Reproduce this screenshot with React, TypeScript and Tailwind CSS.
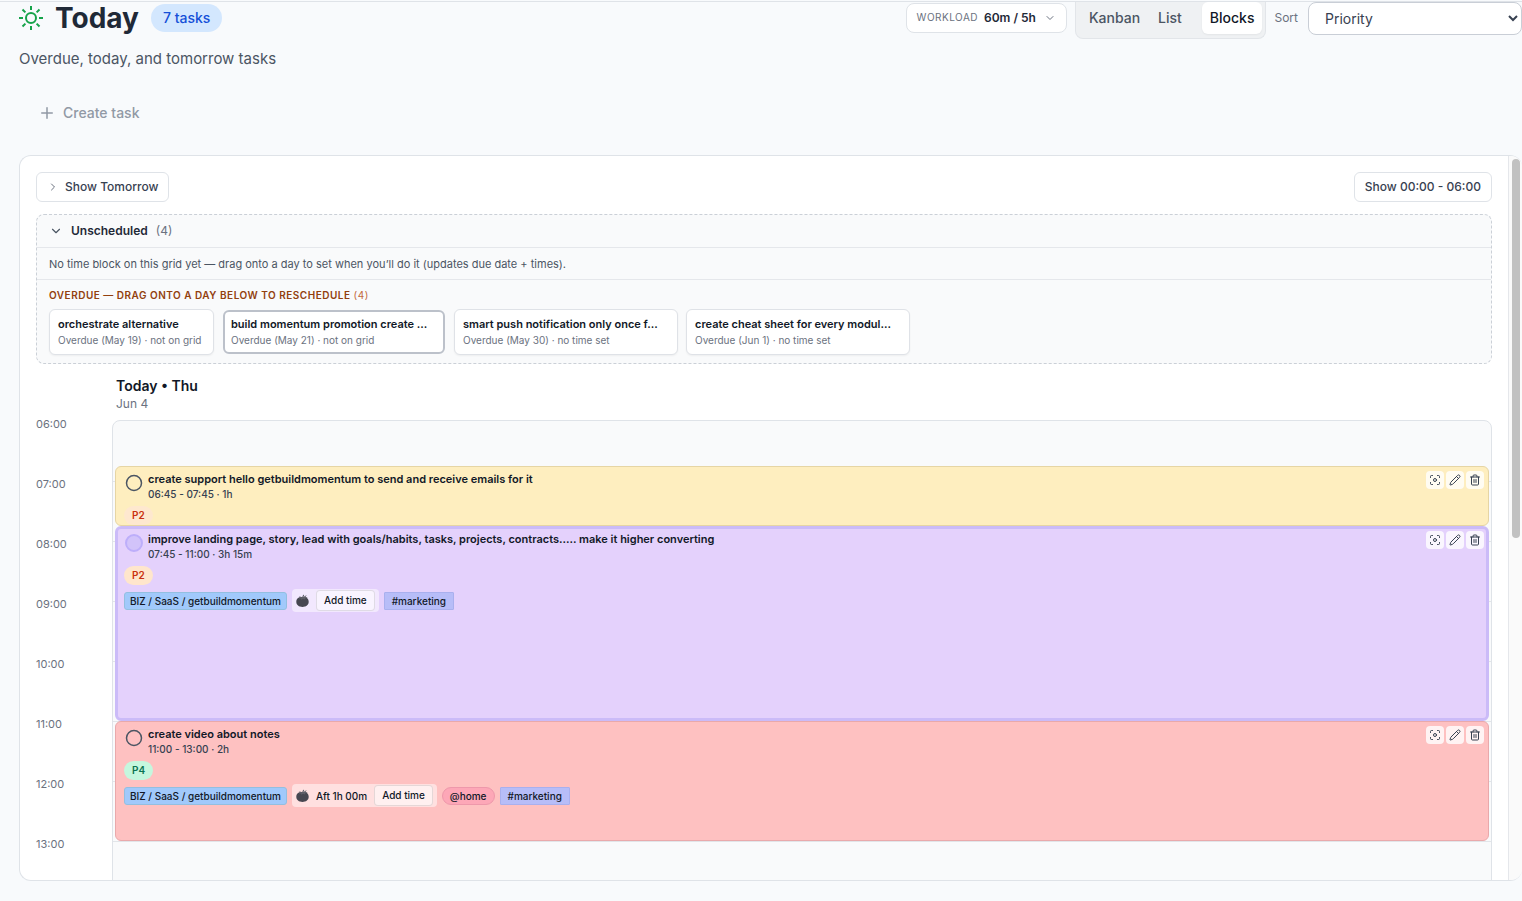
import React, { useState } from 'react';
import { ChevronDown, ChevronRight, Circle, Focus, Pencil, Plus, Trash2 } from 'lucide-react';

const START_HOUR = 6;
const HOUR_HEIGHT = 60;
const HOURS = [6, 7, 8, 9, 10, 11, 12, 13];
const VIEWS = ['Kanban', 'List', 'Blocks'];

const OVERDUE = [
    { title: 'orchestrate alternative', meta: 'Overdue (May 19) · not on grid', width: 'w-[165px]' },
    { title: 'build momentum promotion create ...', meta: 'Overdue (May 21) · not on grid', width: 'w-[222px]', active: true },
    { title: 'smart push notification only once f...', meta: 'Overdue (May 30) · no time set', width: 'w-56' },
    { title: 'create cheat sheet for every modul...', meta: 'Overdue (Jun 1) · no time set', width: 'w-56' },
];

type Block = {
    title: string;
    time: string;
    start: number;
    end: number;
    color: string;
    priority: string;
    priorityColor: string;
    selected?: boolean;
    project?: string;
    estimate?: string;
    context?: string;
    tag?: string;
};

const BLOCKS: Block[] = [
    {
        title: 'create support hello getbuildmomentum to send and receive emails for it',
        time: '06:45 - 07:45 · 1h',
        start: 6.75,
        end: 7.75,
        color: 'bg-[#feeebf] border border-[#e6d5a4]',
        priority: 'P2',
        priorityColor: 'bg-[#fee8cf] text-[#c9300f]',
    },
    {
        title: 'improve landing page, story, lead with goals/habits, tasks, projects, contracts..... make it higher converting',
        time: '07:45 - 11:00 · 3h 15m',
        start: 7.75,
        end: 11,
        color: 'bg-[#e4d1fc] border-3 border-[#cbbbf8]',
        priority: 'P2',
        priorityColor: 'bg-[#ffe6cc] text-[#c9300f]',
        selected: true,
        project: 'BIZ / SaaS / getbuildmomentum',
        tag: '#marketing',
    },
    {
        title: 'create video about notes',
        time: '11:00 - 13:00 · 2h',
        start: 11,
        end: 13,
        color: 'bg-[#fec1c1] border border-[#e9a9ab]',
        priority: 'P4',
        priorityColor: 'bg-[#c5f7de] text-[#0b7350]',
        project: 'BIZ / SaaS / getbuildmomentum',
        estimate: 'Aft 1h 00m',
        context: '@home',
        tag: '#marketing',
    },
];

const pad = (hour: number) => `${String(hour).padStart(2, '0')}:00`;

const SunIcon = () => (
    <svg width="24" height="24" viewBox="0 0 24 24" fill="none" stroke="#16a34a" strokeWidth="2" className="shrink-0">
        <circle cx="12" cy="12" r="5" />
        <path d="M12 0v4M12 20v4M0 12h4M20 12h4M3.5 3.5l2.9 2.9M17.6 17.6l2.9 2.9M3.5 20.5l2.9-2.9M17.6 6.4l2.9-2.9" />
    </svg>
);

const TomatoIcon = () => (
    <svg width="13" height="13" viewBox="0 0 13 13" fill="none" className="shrink-0">
        <path d="M6.5 3C10.200 2.600 12.700 4.500 12.700 7.700c0 3.200-2.700 5.200-6.200 5.200S.3 10.900.3 7.700C.3 4.500 2.800 2.600 6.500 3Z" fill="#474751" />
        <path d="M6 3.400 7.200.8l1 .3-.8 2 3.300-2-1.200 2 2.300.5-2.700.9-.3 1.100-1.700-.9-2 1.100.1-1.400-2.400.3 1.400-1.200-1.500-1 2.300.2Z" fill="#5f5f69" />
    </svg>
);

const BlockAction = ({ label, icon: Icon }: { label: string; icon: React.ElementType }) => (
    <button aria-label={label} className="flex size-[18px] items-center justify-center rounded bg-white/80 text-[#374151]">
        <Icon size={12} strokeWidth={2} />
    </button>
);

const TimeBlock = ({ block }: { block: Block }) => (
    <article
        className={`absolute inset-x-0.5 overflow-hidden rounded-md ${block.color}`}
        style={{
            top: (block.start - START_HOUR) * HOUR_HEIGHT,
            height: (block.end - block.start) * HOUR_HEIGHT,
        }}
    >
        <div className={block.selected ? 'py-0.5 pr-0.5 pl-1.5' : 'py-1 pr-1 pl-2'}>
            <div className="flex items-start gap-1">
                <button
                    aria-label={`Complete ${block.title}`}
                    className="mt-0.5 flex size-5 shrink-0 items-center justify-center"
                >
                    {block.selected ? (
                        <span className="size-[18px] rounded-full border-2 border-[#bdaefa] bg-[#d2c3fa]" />
                    ) : (
                        <Circle size={18} className="text-[#4b5563]" />
                    )}
                </button>
                <div className="min-w-0 flex-1">
                    <h3 className="truncate text-[11px] leading-4 font-semibold text-[#111827]">{block.title}</h3>
                    <p className="text-[10px] leading-[14px] font-medium text-[#374151]">{block.time}</p>
                </div>
                <div className="flex gap-0.5">
                    <BlockAction label="Focus" icon={Focus} />
                    <BlockAction label="Edit" icon={Pencil} />
                    <BlockAction label="Delete" icon={Trash2} />
                </div>
            </div>
            <div className="mt-[5px] flex">
                <span className={`rounded-full px-2 text-[10px] leading-[19px] font-semibold ${block.priorityColor}`}>
                    {block.priority}
                </span>
            </div>
            {block.project && (
                <div className="mt-1 flex items-center gap-[5px] text-[10px] leading-4 font-medium text-[#111827]">
                    <span className="rounded-[3px] border border-[#93bfe0] bg-[#a1c9fb] px-[5px]">{block.project}</span>
                    <div className="flex items-center gap-[7px] rounded bg-white/50 px-1 py-px">
                        <TomatoIcon />
                        {block.estimate && <span>{block.estimate}</span>}
                        <button className="rounded border border-black/10 bg-white/50 px-[7px] leading-[19px]">Add time</button>
                    </div>
                    {block.context && (
                        <span className="rounded-full border border-[#ee98ab] bg-[#fda7b7] px-[7px]">{block.context}</span>
                    )}
                    <span className="rounded-[1px] border border-[#a9b0ee] bg-[#b7bdf8] px-[7px]">{block.tag}</span>
                </div>
            )}
        </div>
    </article>
);

const Header = ({ view, onView }: { view: string; onView: (view: string) => void }) => (
    <header className="pl-[19px]">
        <div className="flex items-start justify-between">
            <div className="flex h-8 items-center gap-3">
                <SunIcon />
                <h1 className="text-[28px] leading-8 font-bold text-[#1f2937]">Today</h1>
                <span className="rounded-full bg-[#d3e7fe] px-3 text-sm leading-7 font-medium text-[#1550d8]">7 tasks</span>
            </div>
            <div className="flex items-start">
                <button className="mt-px mr-2 flex h-[30px] items-center gap-1.5 rounded-lg border border-[#dfe3e8] bg-white px-2.5 text-xs font-semibold text-[#1f2937]">
                    <span className="text-[10px] font-normal tracking-wider text-[#6b7280]">WORKLOAD</span>
                    60m / 5h
                    <ChevronDown size={12} className="ml-0.5 text-[#6b7280]" />
                </button>
                <div className="mr-2 flex gap-0.5 rounded-b-lg border border-t-0 border-[#e2e5e9] bg-[#eff1f3] pr-[3px] pb-1 pl-[5px]">
                    {VIEWS.map(name => (
                        <button
                            key={name}
                            onClick={() => onView(name)}
                            className={`h-8 rounded-md px-2 text-sm font-medium ${
                                name === view ? 'ml-2.5 bg-white text-[#111827] shadow-xs' : 'text-[#4b5563]'
                            }`}
                        >
                            {name}
                        </button>
                    ))}
                </div>
                <label htmlFor="sort" className="mr-2.5 text-xs leading-8 text-[#6b7280]">Sort</label>
                <select
                    id="sort"
                    defaultValue="priority"
                    className="h-[33px] w-[214px] rounded-lg border border-[#c9ced6] bg-white pl-3 text-sm text-[#374151]"
                >
                    <option value="priority">Priority</option>
                </select>
            </div>
        </div>
        <p className="mt-2 text-[15px] leading-6 text-[#4b5563]">Overdue, today, and tomorrow tasks</p>
        <button className="mt-[30px] ml-[19px] flex items-center gap-[7px] text-sm leading-6 font-medium text-[#9199a5]">
            <Plus size={18} /> Create task
        </button>
    </header>
);

const Unscheduled = () => (
    <section className="mt-3 rounded-lg border border-dashed border-[#cbd0d7] bg-[#f9fafb]">
        <button className="flex h-8 w-full items-center gap-2 px-3 text-xs font-semibold text-[#1f2937]">
            <ChevronDown size={14} className="text-[#4b5563]" />
            Unscheduled
            <span className="font-normal text-[#6b7280]">(4)</span>
        </button>
        <p className="border-y border-[#e5e7eb] px-3 pt-1 pb-[3px] text-[11px] leading-6 text-[#4b5563]">
            No time block on this grid yet — drag onto a day to set when you’ll do it (updates due date + times).
        </p>
        <div className="px-3 pt-[7px] pb-2">
            <h2 className="text-[10px] leading-4 font-semibold tracking-wider text-[#92400e]">
                OVERDUE — DRAG ONTO A DAY BELOW TO RESCHEDULE <span className="font-normal text-[#c2693c]">(4)</span>
            </h2>
            <ul className="mt-1.5 flex items-stretch gap-2">
                {OVERDUE.map(task => (
                    <li
                        key={task.title}
                        className={`rounded-md bg-white whitespace-nowrap ${task.width} ${
                            task.active
                                ? 'm-px border-2 border-[#bcc1ca] px-1.5 py-1'
                                : 'border border-[#dfe2e7] px-2 py-1.5 shadow-xs'
                        }`}
                    >
                        <h3 className="text-[11px] leading-4 font-semibold text-[#111827]">{task.title}</h3>
                        <p className="text-[10px] leading-4 text-[#6b7280]">{task.meta}</p>
                    </li>
                ))}
            </ul>
        </div>
    </section>
);

const DayGrid = () => (
    <section className="mt-3 flex">
        <div className="w-[76px] shrink-0 pt-10">
            {HOURS.map(hour => (
                <div key={hour} className="h-[60px] text-[11px] leading-4 text-[#6b7280]">{pad(hour)}</div>
            ))}
        </div>
        <div className="min-w-0 flex-1">
            <div className="h-11 px-1">
                <h2 className="text-sm leading-5 font-semibold text-[#111827]">Today • Thu</h2>
                <p className="text-xs leading-4 text-[#6b7280]">Jun 4</p>
            </div>
            <div className="relative rounded-t-lg border border-[#dfe3e8] bg-[#f9fafb]">
                {HOURS.map(hour => (
                    <div key={hour} className="h-[60px] border-t border-[#e2e5e9] first:border-t-0" />
                ))}
                {BLOCKS.map(block => (
                    <TimeBlock key={block.title} block={block} />
                ))}
            </div>
        </div>
    </section>
);

export default function App() {
    const [view, setView] = useState('Blocks');

    return (
        <div className="flex h-screen flex-col overflow-hidden bg-[#f8fafc] pt-px font-['Inter',sans-serif]">
            <div className="h-px shrink-0 bg-[#dfe3e8]" />
            <Header view={view} onView={setView} />
            <main className="mt-[30px] mb-5 ml-[19px] flex min-h-0 flex-1 overflow-hidden rounded-xl border border-r-0 border-[#dfe3e8] bg-white">
                <div className="min-w-0 flex-1 p-4">
                    <div className="flex items-center justify-between">
                        <button className="flex h-[30px] items-center gap-1.5 rounded-md border border-[#dfe3e8] bg-white px-2.5 text-xs font-medium text-[#374151]">
                            <ChevronRight size={12} className="text-[#6b7280]" />
                            Show Tomorrow
                        </button>
                        <button className="h-[30px] rounded-md border border-[#dfe3e8] bg-white px-2.5 text-xs font-medium text-[#374151]">
                            Show 00:00 - 06:00
                        </button>
                    </div>
                    <Unscheduled />
                    <DayGrid />
                </div>
                {/* Scroll track */}
                <div className="w-[14px] shrink-0 border-l border-[#e5e7eb] bg-[#fafafa] px-[3px] pt-[3px]">
                    <div className="h-[379px] w-2 rounded-full bg-[#c1c1c1]" />
                </div>
            </main>
        </div>
    );
}
